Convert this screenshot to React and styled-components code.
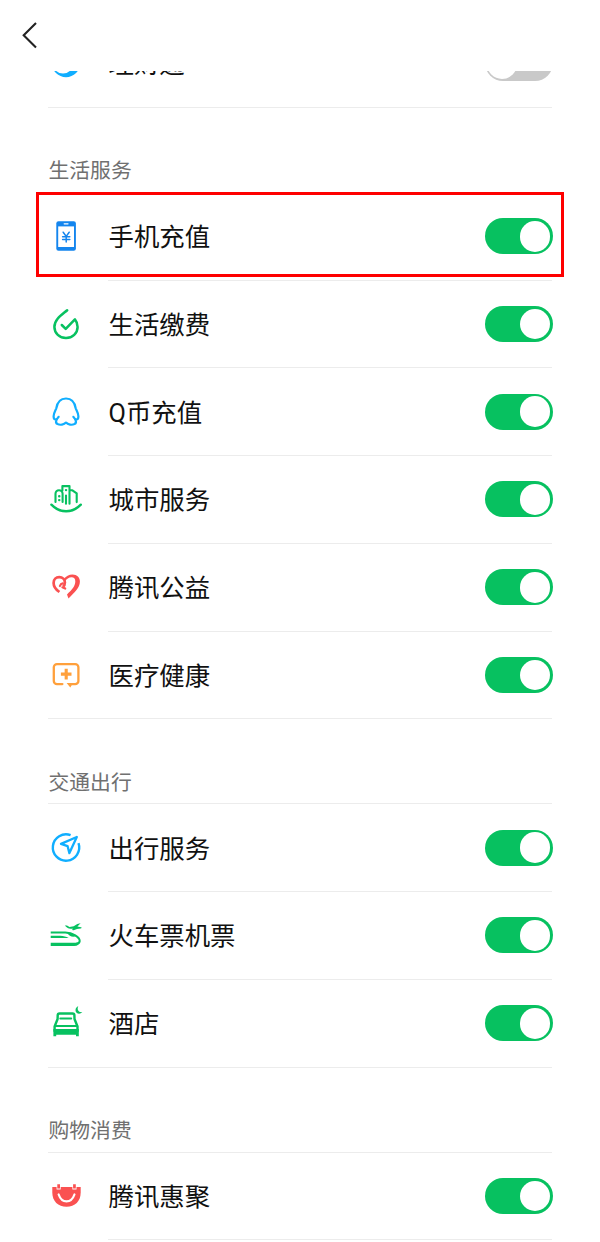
import React from 'react';
import styled, { createGlobalStyle } from 'styled-components';

const GREEN = '#07c160';
const BLUE = '#10aeff';
const RED = '#fa5151';
const ORANGE = '#ffa03c';

const GlobalStyle = createGlobalStyle`
	* {
		box-sizing: border-box;
	}

	body {
		margin: 0;
		background-color: #fff;
		font-family: Roboto, 'Noto Sans CJK SC', sans-serif;
	}
`;

const Page = styled.div`
	display: flex;
	flex-direction: column;
	height: 1242px;
	overflow: hidden;
	background-color: #fff;
`;

const Header = styled.header`
	display: flex;
	align-items: center;
	flex: none;
	height: 71px;
	padding: 0 0 1px 20px;
`;

const BackButton = styled.button`
	display: flex;
	padding: 0;
	border: 0;
	background: none;
`;

const ScrollArea = styled.main`
	flex: 1;
	min-height: 0;
	overflow: hidden;
	padding: 0 48px;
`;

/* the list is scrolled, its first row is half under the header */
const List = styled.div`
	margin-top: -50.9px;
`;

const SectionTitle = styled.h2`
	display: flex;
	align-items: flex-end;
	height: 85px;
	margin: 0;
	padding: 0 0 5.6px 0.5px;
	border-bottom: 1px solid #ececec;
	color: #707070;
	font-size: 20.8px;
	font-weight: 400;
	line-height: 30px;
`;

const Row = styled.div`
	position: relative;
	display: flex;
	height: 87.75px;
	border-bottom: 1px solid ${props => (props.$last ? '#ececec' : 'transparent')};
`;

const IconCell = styled.div`
	display: flex;
	align-items: center;
	flex: none;
	width: 60px;
`;

const RowBody = styled.div`
	display: flex;
	flex: 1;
	align-items: center;
	justify-content: space-between;
	margin-bottom: -1px;
	border-bottom: 1px solid #ececec;
`;

const Label = styled.span`
	padding: 2px 0 0 0.5px;
	color: #111;
	font-size: 25.4px;
	line-height: 36px;
`;

const Switch = styled.span`
	display: flex;
	justify-content: ${props => (props.$on ? 'flex-end' : 'flex-start')};
	width: 68px;
	height: 36px;
	margin-right: -0.5px;
	padding: 2.7px 2.4px;
	border-radius: 18px;
	background-color: ${props => (props.$on ? GREEN : '#c9c9c9')};
`;

const Knob = styled.span`
	width: 30.6px;
	height: 30.6px;
	border-radius: 50%;
	background-color: #fff;
`;

const Highlight = styled.div`
	position: absolute;
	top: -0.6px;
	left: -12px;
	right: -12px;
	height: 85px;
	border: 3px solid #fe0000;
`;

const Icon = ({ color, children }) => (
	<svg
		width="36"
		height="36"
		viewBox="0 0 36 36"
		fill="none"
		stroke={color}
		strokeWidth="2.2"
		strokeLinecap="round"
		strokeLinejoin="round"
	>
		{children}
	</svg>
);

const FundIcon = () => (
	<Icon color="none">
		<circle cx="18" cy="18" r="14.2" fill={BLUE} />
		<circle cx="15" cy="18.6" r="10" fill="#fff" />
	</Icon>
);

const PhoneIcon = () => (
	<Icon color="#1485ee">
		<rect x="8.3" y="3.2" width="19.6" height="29.6" rx="2.2" fill="#1485ee" stroke="none" />
		<rect x="10.2" y="8.4" width="15.8" height="20.6" fill="#fff" stroke="none" />
		<path d="M16.2 5.8h3.8" stroke="#fff" strokeWidth="1.3" />
		<path d="M15.2 14.2l3 4.2 3-4.2M18.2 18.4v5.6M14.6 18.7h7.2M14.6 21.5h7.2" strokeWidth="1.5" />
	</Icon>
);

const BillIcon = () => (
	<Icon color={GREEN}>
		<path
			d="M19.2 4.2C13.5 9 6.4 13.4 6.4 21a11.6 11.1 0 0 0 23.2 0c0-3-1-5.600-2.700-7.600l-9.200 9.500-3.900-3.900"
			strokeWidth="2.5"
		/>
	</Icon>
);

const PenguinIcon = () => (
	<Icon color={BLUE}>
		<path d="M10.6 22.800C9.600 24.400 8.500 25.500 7.500 25.500c-1.300 0-1.900-1.300-1.900-3.200 0-3.300 1.600-5.300 2.700-8C9.300 8.300 12.500 4.500 18 4.500s8.700 3.800 9.700 9.800c1.100 2.700 2.700 4.700 2.700 8 0 1.900-.6 3.200-1.900 3.200-1 0-2.100-1.100-3.100-2.700" />
		<path d="M8.600 25.600c-.9 1.900-.7 3.700.9 4.500 2.600 1.200 6.500.7 8.500-1.500 2 2.200 5.900 2.700 8.500 1.500 1.600-.8 1.800-2.600.9-4.500" />
	</Icon>
);

const CityIcon = () => (
	<Icon color={GREEN}>
		<path d="M3.400 23.700c8.600 8.800 20.800 8.800 29.400 0" strokeWidth="2.400" />
		<path d="M7.500 20.900V12.800c0-2 1.500-3.600 3.500-3.600s3.600 1.600 3.600 3.600v8.100M14.400 9.500V5.100h7.100v17.700M18 22.800v-8.200M22.500 9.300h1.900l4.300 3v8.800" strokeWidth="2.100" />
		<path d="M18 9.100h.1M11.200 15.300h.1M11.200 19.100h.1" strokeWidth="2.400" />
	</Icon>
);

/* two ribbons: the left one curls inward, the right one is the thick half */
const HeartIcon = () => (
	<Icon color={RED}>
		<path d="M11.400 23C7.700 20.400 5.600 17.300 5.600 13.900c0-3.600 2.400-5.700 5.600-5.700 3.400 0 5.700 2.200 5.700 5.400 0 1.800-.6 3.200-1.800 4.100" strokeWidth="2.700" strokeLinecap="butt" />
		<path d="M11.900 17c.5-1.500 1.500-2.500 2.900-2.700M14.400 18.300l2.800 1.300" strokeWidth="2.200" />
		<path
			d="M15.600 9.900c2.300-2.700 5.400-4.500 8.900-4.500 4.600 0 7.400 2.900 7.400 7.100 0 6.300-5.200 10.500-11.400 17.100l-1.500-4.200c5.300-4.900 8.300-8.400 8.300-13.100 0-2.700-1.300-4.100-3.700-4.100-2.700 0-5.100 1.700-6.700 4z"
			fill={RED}
			stroke="none"
		/>
	</Icon>
);

const MedicalIcon = () => (
	<Icon color={ORANGE}>
		<path d="M14.400 27.100H9a3.200 3.200 0 0 1-3.200-3.200V10.300A3.200 3.200 0 0 1 9 7.100h18.200a3.200 3.200 0 0 1 3.200 3.200v13.600a3.200 3.200 0 0 1-3.200 3.200h-4" strokeWidth="2.300" />
		<path d="M18.600 26h6.400l-2.700 4.400z" fill={ORANGE} stroke="none" />
		<path d="M18.200 11.800v10.600M12.900 17.100h10.600" strokeWidth="3.100" strokeLinecap="butt" />
	</Icon>
);

const TravelIcon = () => (
	<Icon color={BLUE}>
		<path d="M22.600 5.100A13.200 13.200 0 1 0 30.500 13.200" strokeWidth="2.400" strokeLinecap="butt" />
		<path d="M28.800 7L13 13.900l6.600 2.300 1.800 6.900z" strokeWidth="2.300" />
	</Icon>
);

const TrainIcon = () => (
	<Icon color={GREEN}>
		<path d="M2.700 15.600h14.500c7.500.2 14.500 4.600 14.500 8.500 0 1.500-1.500 2.700-4 3" strokeWidth="2" strokeLinecap="butt" />
		<path d="M2.700 18.700h9.500c3.600 0 5.800 1 8.500 2.200H2.700z" fill={GREEN} stroke="none" />
		<path d="M19.200 15.700c3.800 0 7.200 1.200 9.100 3.200-2.900 1.700-7.200.7-9.100-3.200z" fill={GREEN} stroke="none" />
		<path d="M2.700 25.800h23.500c2.300 0 4.500-.4 6-1.600-.5 3-2.700 4.900-6 4.900H2.700z" fill={GREEN} stroke="none" />
		<path
			d="M16.800 8.400l2.200.2 2.500 1.400 4.200-.8 3.600-2.100 3.300-.8-3.200 3.300 3.700.7c.9.300.5 1.100-.5 1.200l-3.600.4-3.300 1.300-1.900-.1 1.400-1.300c-3.300.2-6.400-.7-8.400-3.400z"
			fill={GREEN}
			stroke="none"
		/>
	</Icon>
);

const HotelIcon = () => (
	<Icon color={GREEN}>
		<path d="M6.600 26v-4.500l3-7.500.1-3.700c0-1.100.8-1.800 1.900-1.800h12.900c1.100 0 1.900.7 1.900 1.800l.1 3.700 3 7.500V26" strokeWidth="2.400" />
		<path d="M12.300 13.500h10.900M7 20.900h22.200" strokeWidth="2" />
		<path d="M5.400 24h25.400v7.200h-2.800v-1.400H8.200v1.400H5.400z" fill={GREEN} stroke="none" />
		<path d="M30.300 1.300c-1.700 3.200.4 6.500 4 5.800-2.600 3.200-6.800 1.300-6.800-1.900 0-1.900 1.200-3.300 2.800-3.900z" fill={GREEN} stroke="none" />
	</Icon>
);

const BagIcon = () => (
	<Icon color="#fff">
		<path d="M4.300 9h28.400v5.500c0 8.700-5.800 14.300-14.200 14.300S4.300 23.200 4.300 14.500z" fill={RED} stroke="none" />
		<path d="M8.600 8.600h4.100v2.800H8.600zM24.400 8.600h4.100v2.800h-4.100z" fill="#fff" stroke="none" />
		<path d="M9.300 6.200H12v4.200H9.300zM25.100 6.200h2.700v4.200h-2.700z" fill={RED} stroke="none" />
		<path d="M10.600 16.400c3.200 9.300 12.700 9.300 15.900 0" strokeWidth="2.100" />
	</Icon>
);

const sections = [
	{
		rows: [{ name: '理财通', icon: FundIcon, on: false }]
	},
	{
		title: '生活服务',
		rows: [
			{ name: '手机充值', icon: PhoneIcon, on: true, highlight: true },
			{ name: '生活缴费', icon: BillIcon, on: true },
			{ name: 'Q币充值', icon: PenguinIcon, on: true },
			{ name: '城市服务', icon: CityIcon, on: true },
			{ name: '腾讯公益', icon: HeartIcon, on: true },
			{ name: '医疗健康', icon: MedicalIcon, on: true }
		]
	},
	{
		title: '交通出行',
		rows: [
			{ name: '出行服务', icon: TravelIcon, on: true },
			{ name: '火车票机票', icon: TrainIcon, on: true },
			{ name: '酒店', icon: HotelIcon, on: true }
		]
	},
	{
		title: '购物消费',
		more: true,
		rows: [{ name: '腾讯惠聚', icon: BagIcon, on: true }]
	}
];

const ServiceRow = ({ item, last }) => {
	const ItemIcon = item.icon;

	return (
		<Row $last={last}>
			<IconCell>
				<ItemIcon />
			</IconCell>
			<RowBody>
				<Label>{item.name}</Label>
				<Switch $on={item.on} role="switch" aria-checked={item.on}>
					<Knob />
				</Switch>
			</RowBody>
			{item.highlight && <Highlight />}
		</Row>
	);
};

const App = () => (
	<Page>
		<GlobalStyle />
		<Header>
			<BackButton aria-label="返回">
				<svg width="20" height="28" viewBox="0 0 20 28" fill="none" stroke="#222" strokeWidth="2.1">
					<path d="M16 2L3.700 14.200 16 26.400" />
				</svg>
			</BackButton>
		</Header>
		<ScrollArea>
			<List>
				{sections.map((section, i) => (
					<section key={i}>
						{section.title && <SectionTitle>{section.title}</SectionTitle>}
						{section.rows.map((item, j) => (
							<ServiceRow
								key={item.name}
								item={item}
								last={!section.more && j === section.rows.length - 1}
							/>
						))}
					</section>
				))}
			</List>
		</ScrollArea>
	</Page>
);

export default App;
